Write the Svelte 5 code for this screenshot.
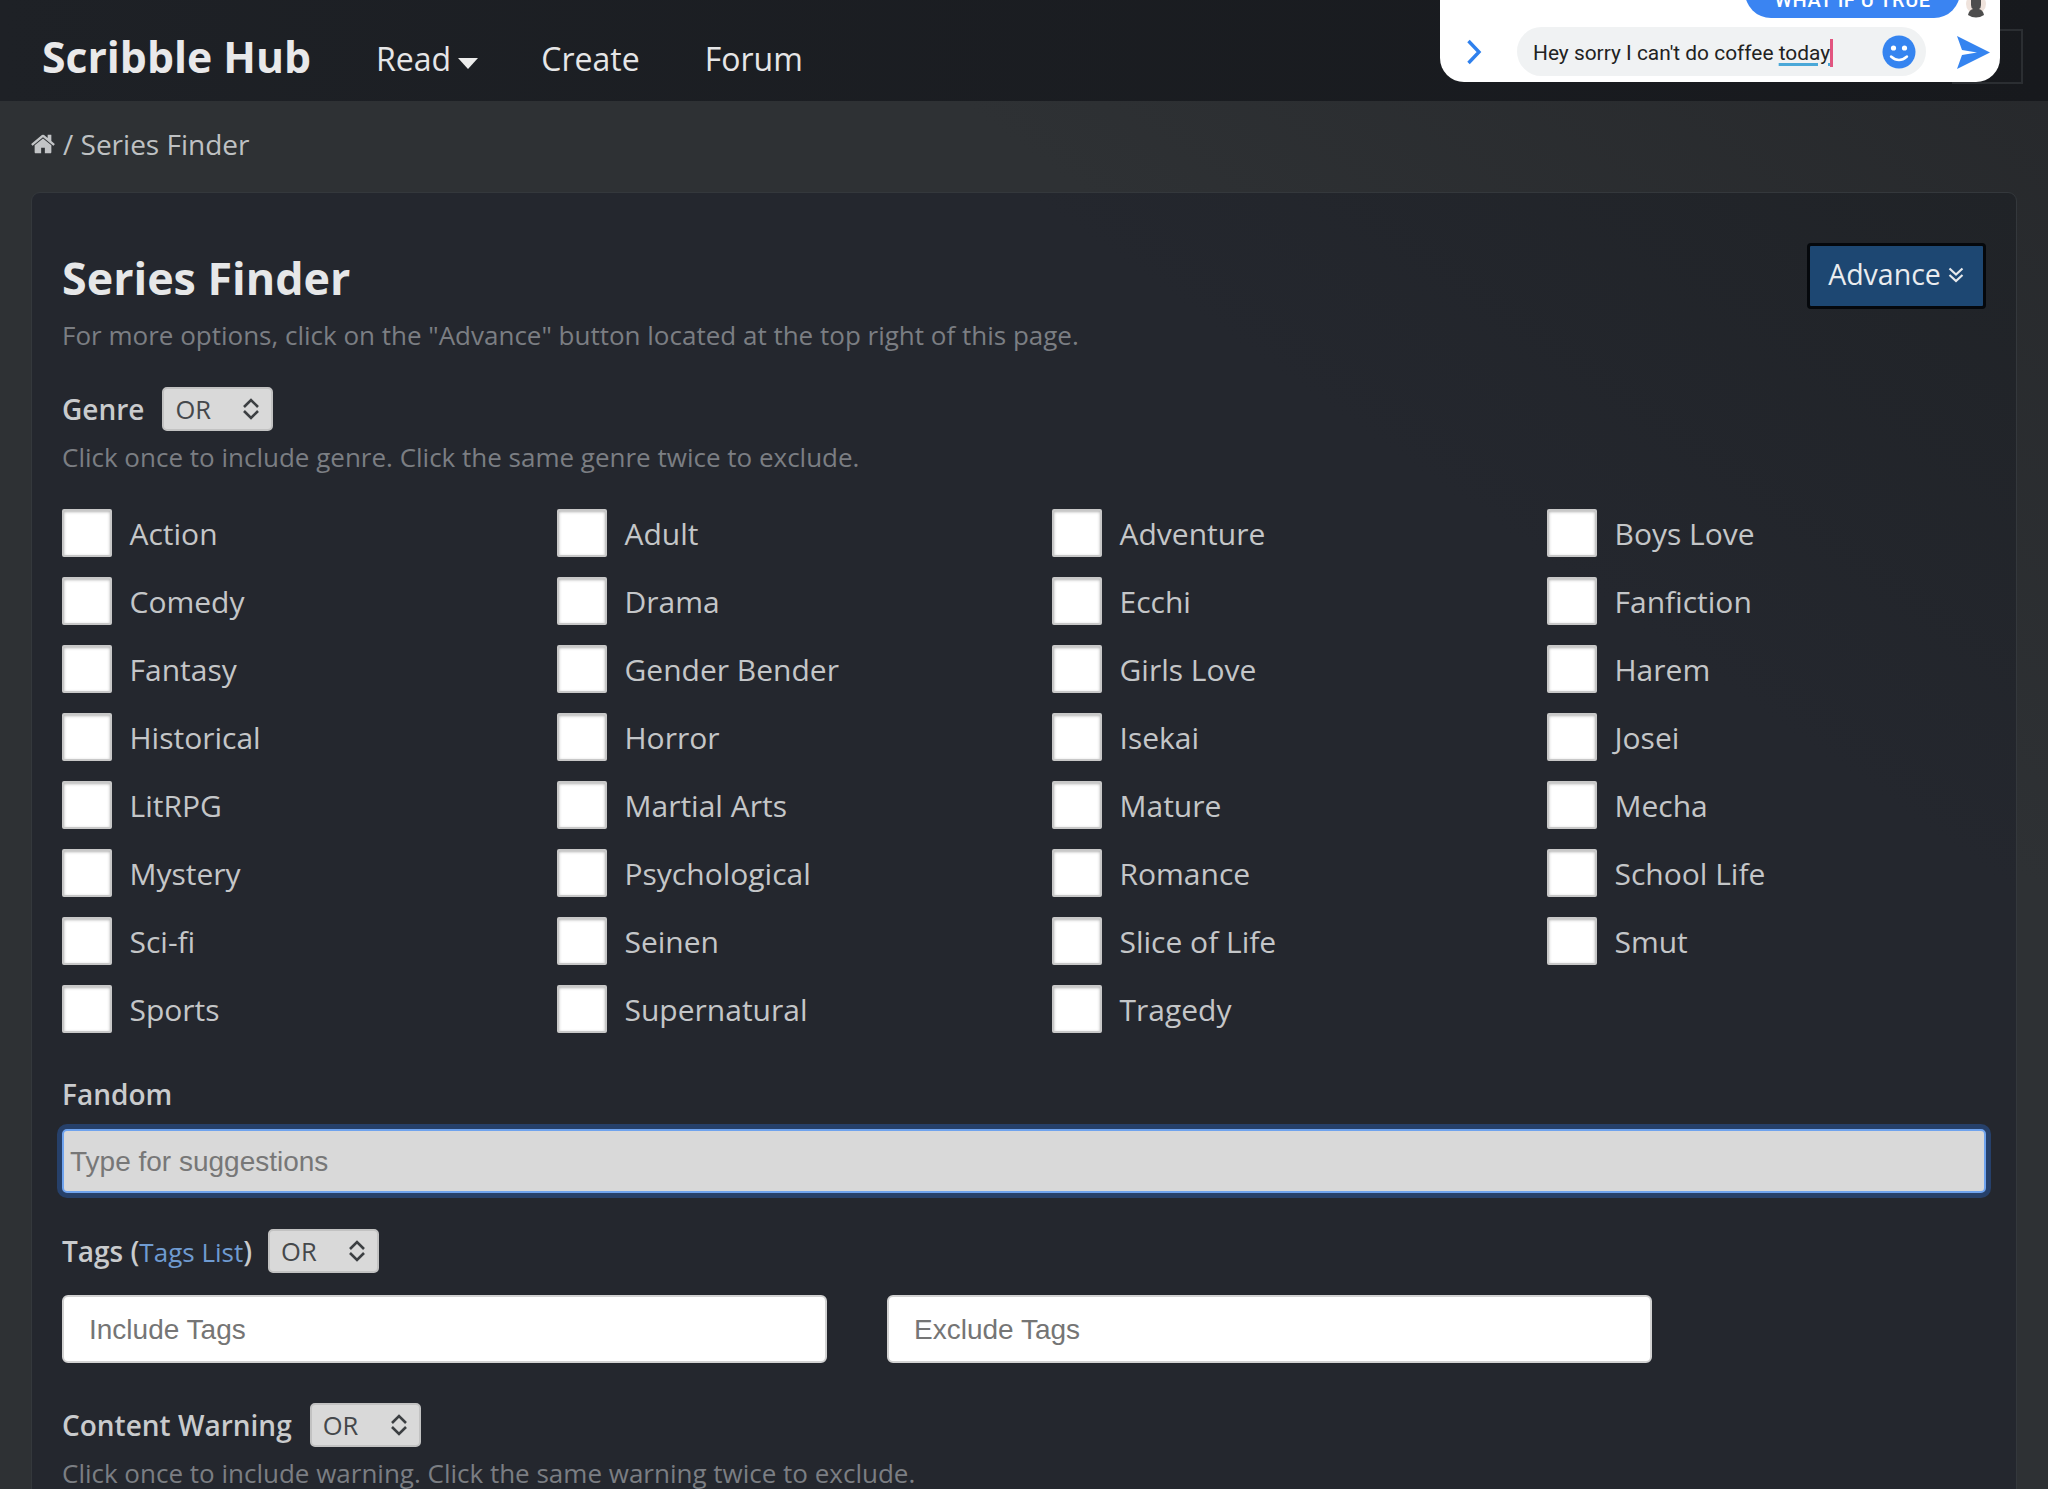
<script>
  const genres = ['Action','Adult','Adventure','Boys Love','Comedy','Drama','Ecchi','Fanfiction','Fantasy','Gender Bender','Girls Love','Harem','Historical','Horror','Isekai','Josei','LitRPG','Martial Arts','Mature','Mecha','Mystery','Psychological','Romance','School Life','Sci-fi','Seinen','Slice of Life','Smut','Sports','Supernatural','Tragedy'];
</script>

{#snippet orSelect()}
  <span class="select">
    <span>OR</span>
    <svg width="18" height="22" viewBox="0 0 18 22"><path d="M2 9l7-7 7 7M2 13l7 7 7-7" fill="none" stroke="#3c3f42" stroke-width="2.600"/></svg>
  </span>
{/snippet}

<div class="page">
  <nav class="nav">
    <span class="brand">Scribble Hub</span>
    <span class="link read">Read <i class="caret"></i></span>
    <span class="link">Create</span>
    <span class="link">Forum</span>
    <span class="toggler"></span>
  </nav>

  <div class="chat">
    <div class="bubble">WHAT IF U TRUE</div>
    <svg class="avatar" width="20" height="20" viewBox="0 0 20 20"><circle cx="10" cy="6" r="10" fill="#efe3dc"/><path d="M5-2h10v9q0 3-2 4 4 1 5 6-8 5-16 0 1-5 5-6-2-1-2-4z" fill="#4d4d4d"/></svg>
    <svg class="chev" width="16" height="26" viewBox="0 0 16 26"><path d="M2.500 2l10.500 11-10.500 11" fill="none" stroke="#2f80ed" stroke-width="3.400"/></svg>
    <div class="pill">
      <span class="typed">Hey sorry I can't do coffee <u>today</u></span>
      <svg class="smile" width="34" height="34" viewBox="0 0 34 34"><circle cx="17" cy="17" r="16.500" fill="#3584f0"/><circle cx="11.500" cy="13" r="2.600" fill="#fff"/><circle cx="22.500" cy="13" r="2.600" fill="#fff"/><path d="M9 21.500q8 7 16 0" fill="none" stroke="#fff" stroke-width="2.400" stroke-linecap="round"/></svg>
    </div>
    <svg class="send" width="34" height="33" viewBox="0 0 34 33"><path d="M1 0l33 16.500L1 33l5-14 15-2.500L6 14z" fill="#3584f0"/></svg>
  </div>

  <div class="crumb">
    <svg width="26" height="26" viewBox="0 0 1792 1792"><path fill="#c2c4c6" d="M1472 992v480q0 26-19 45t-45 19h-384v-384h-256v384h-384q-26 0-45-19t-19-45v-480q0-1 .5-3t.5-3l575-474 575 474q1 2 1 6zm223-69l-62 74q-8 9-21 11h-3q-13 0-21-7l-692-577-692 577q-12 8-24 7-13-2-21-11l-62-74q-8-10-7-23.500t11-21.500l719-599q32-26 76-26t76 26l244 204v-195q0-14 9-23t23-9h192q14 0 23 9t9 23v408l219 182q10 8 11 21.500t-7 23.500z"/></svg>
    <span>/ Series Finder</span>
  </div>

  <main class="card">
    <header class="head">
      <h1>Series Finder</h1>
      <button class="advance">Advance
        <svg width="18" height="18" viewBox="0 0 18 18"><path d="M2.500 2.500l6.500 6 6.500-6M2.500 9l6.500 6 6.500-6" fill="none" stroke="#e8eaec" stroke-width="2.200"/></svg>
      </button>
    </header>
    <p class="help first">For more options, click on the "Advance" button located at the top right of this page.</p>

    <div class="label-row genre-row"><b>Genre</b>{@render orSelect()}</div>
    <p class="help second">Click once to include genre. Click the same genre twice to exclude.</p>

    <div class="grid">
      {#each genres as g}
        <label class="check"><span class="box"></span><span>{g}</span></label>
      {/each}
    </div>

    <div class="fandom-label"><b>Fandom</b></div>
    <div class="fandom">Type for suggestions</div>

    <div class="label-row tags-row"><b>Tags (<a href="#tags">Tags List</a>)</b>{@render orSelect()}</div>
    <div class="tags">
      <div class="tag-input">Include Tags</div>
      <div class="tag-input">Exclude Tags</div>
    </div>

    <div class="label-row warn-row"><b>Content Warning</b>{@render orSelect()}</div>
    <p class="help last">Click once to include warning. Click the same warning twice to exclude.</p>
  </main>
</div>

<style>
  :global(body) { margin: 0; background: #2d3033; }
  .page {
    position: relative;
    width: 2048px; height: 1489px; overflow: hidden;
    background: linear-gradient(to bottom left, #26282b 0, #2e3134 30%);
    font-family: "Open Sans", sans-serif;
    color: #c9cbcd;
  }
  .nav {
    height: 101px; box-sizing: border-box;
    display: flex; align-items: center;
    padding: 12px 0 0 42px;
    background: linear-gradient(90deg, #1e2126, #17191d);
  }
  .brand { font-size: 42.700px; font-weight: 700; color: #e9e9ea; margin-right: 65px; }
  .link { font-size: 32px; color: #e6e6e7; margin-right: 65px; padding-top: 4px; }
  .read { margin-right: 63px; }
  .caret {
    display: inline-block; vertical-align: middle; margin-left: -1px; margin-top: 2px;
    border-left: 10px solid transparent; border-right: 10px solid transparent; border-top: 11px solid #ececec;
  }
  .toggler {
    margin-left: auto; margin-right: 25px;
    width: 71px; height: 55px; border: 2px solid #2b2e32; box-sizing: border-box;
  }
  .chat {
    position: absolute; left: 1440px; top: 0; width: 560px; height: 82px;
    background: #fff; border-radius: 0 0 24px 24px;
  }
  .bubble {
    position: absolute; left: 305px; top: -10px; width: 215px; height: 28px;
    background: #3a84f2; border-radius: 0 0 26px 26px; color: #fff;
    font: 500 20px Roboto, sans-serif; text-align: center; line-height: 20px; letter-spacing: .5px;
    overflow: hidden;
  }
  .avatar { position: absolute; left: 526px; top: -2px; }
  .chev { position: absolute; left: 26px; top: 39px; }
  .pill {
    position: absolute; left: 77px; top: 27px; width: 409px; height: 49px;
    background: #f0f2f3; border-radius: 25px;
  }
  .typed {
    position: absolute; left: 16px; top: 11.500px; white-space: pre;
    font: 400 20.900px/28px Roboto, sans-serif; color: #222;
    border-right: 3px solid #e2557f;
  }
  .typed u { text-decoration: underline #4aa8d8 3px; text-underline-offset: 3px; }
  .smile { position: absolute; left: 305px; left: 365px; top: 8px; }
  .send { position: absolute; left: 516px; top: 36px; }
  .crumb {
    height: 91px; padding: 0 0 5px 30px; box-sizing: border-box;
    display: flex; align-items: center; gap: 7px;
    font-size: 28px; color: #bfc1c3;
  }
  .card {
    margin-left: 31px; width: 1986px; height: 1400px; box-sizing: border-box;
    background: linear-gradient(to bottom left, #202327 0, #24272e 25%);
    border: 1px solid #34383c; border-radius: 9px;
    padding: 50px 30px 0;
  }
  .head { display: flex; justify-content: space-between; align-items: flex-start; height: 74px; }
  h1 { margin: 6px 0 0; font-size: 44.800px; line-height: 58px; font-weight: 700; color: #e6e7e8; }
  .advance {
    width: 179px; height: 66px; box-sizing: border-box; padding: 0 0 4px;
    background: #1d4772; border: 3px solid #05080c; border-radius: 4px;
    color: #e9ecef; font: 400 28.500px "Open Sans", sans-serif;
    display: flex; align-items: center; justify-content: center; gap: 6px;
  }
  .advance svg { margin-top: 2px; }
  .help { margin: 0; font-size: 26px; line-height: 36px; color: #7b7e83; }
  .label-row { display: flex; align-items: center; gap: 18px; height: 44px; }
  b { font-weight: 600; font-size: 28px; color: #c9cbcd; }
  a { color: #6f9bd1; font-weight: 400; font-size: 26px; text-decoration: none; }
  .genre-row { margin-top: 34px; }
  .second { margin-top: 8px; }
  .last { margin-top: 8px; }
  .select {
    display: inline-flex; align-items: center; justify-content: space-between;
    width: 111px; height: 44px; box-sizing: border-box; padding: 0 11px;
    background: #d9d9d9; border: 2px solid #c2c2c2; border-radius: 5px;
    font-size: 25.500px; color: #45484b;
  }
  .grid {
    display: grid; grid-template-columns: repeat(4, 495px); grid-auto-rows: 68px;
    margin-top: 33px;
  }
  .check { display: flex; align-items: flex-start; gap: 17.500px; font-size: 30px; color: #c4c6c8; line-height: 48px; }
  .check span:last-child { margin-top: 2px; }
  .box {
    width: 50px; height: 48px; margin-top: 1px; box-sizing: border-box; flex: none;
    background: #fff; border: 2px solid #c8c8c8; border-radius: 2px;
    box-shadow: inset 0 1px 3px rgba(0,0,0,.3);
  }
  .fandom-label { margin-top: 25px; height: 34px; line-height: 34px; }
  .fandom {
    margin-top: 18px; height: 64px; box-sizing: border-box; width: 1924px;
    background: #d9d9d9; border: 2px solid #6fa3ee; border-radius: 5px;
    box-shadow: 0 0 0 5px #26406a;
    font: 28px/62px "Liberation Sans", sans-serif; color: #777; padding-left: 6px;
  }
  .tags-row { margin-top: 36px; gap: 16px; }
  .tags { display: flex; gap: 60px; margin-top: 22px; }
  .tag-input {
    width: 765px; height: 68px; box-sizing: border-box; background: #fff;
    border: 2px solid #d2d2d2; border-radius: 6px;
    font: 28px/66px "Liberation Sans", sans-serif; color: #757575; padding-left: 25px;
  }
  .warn-row { margin-top: 40px; gap: 18px; }
</style>
